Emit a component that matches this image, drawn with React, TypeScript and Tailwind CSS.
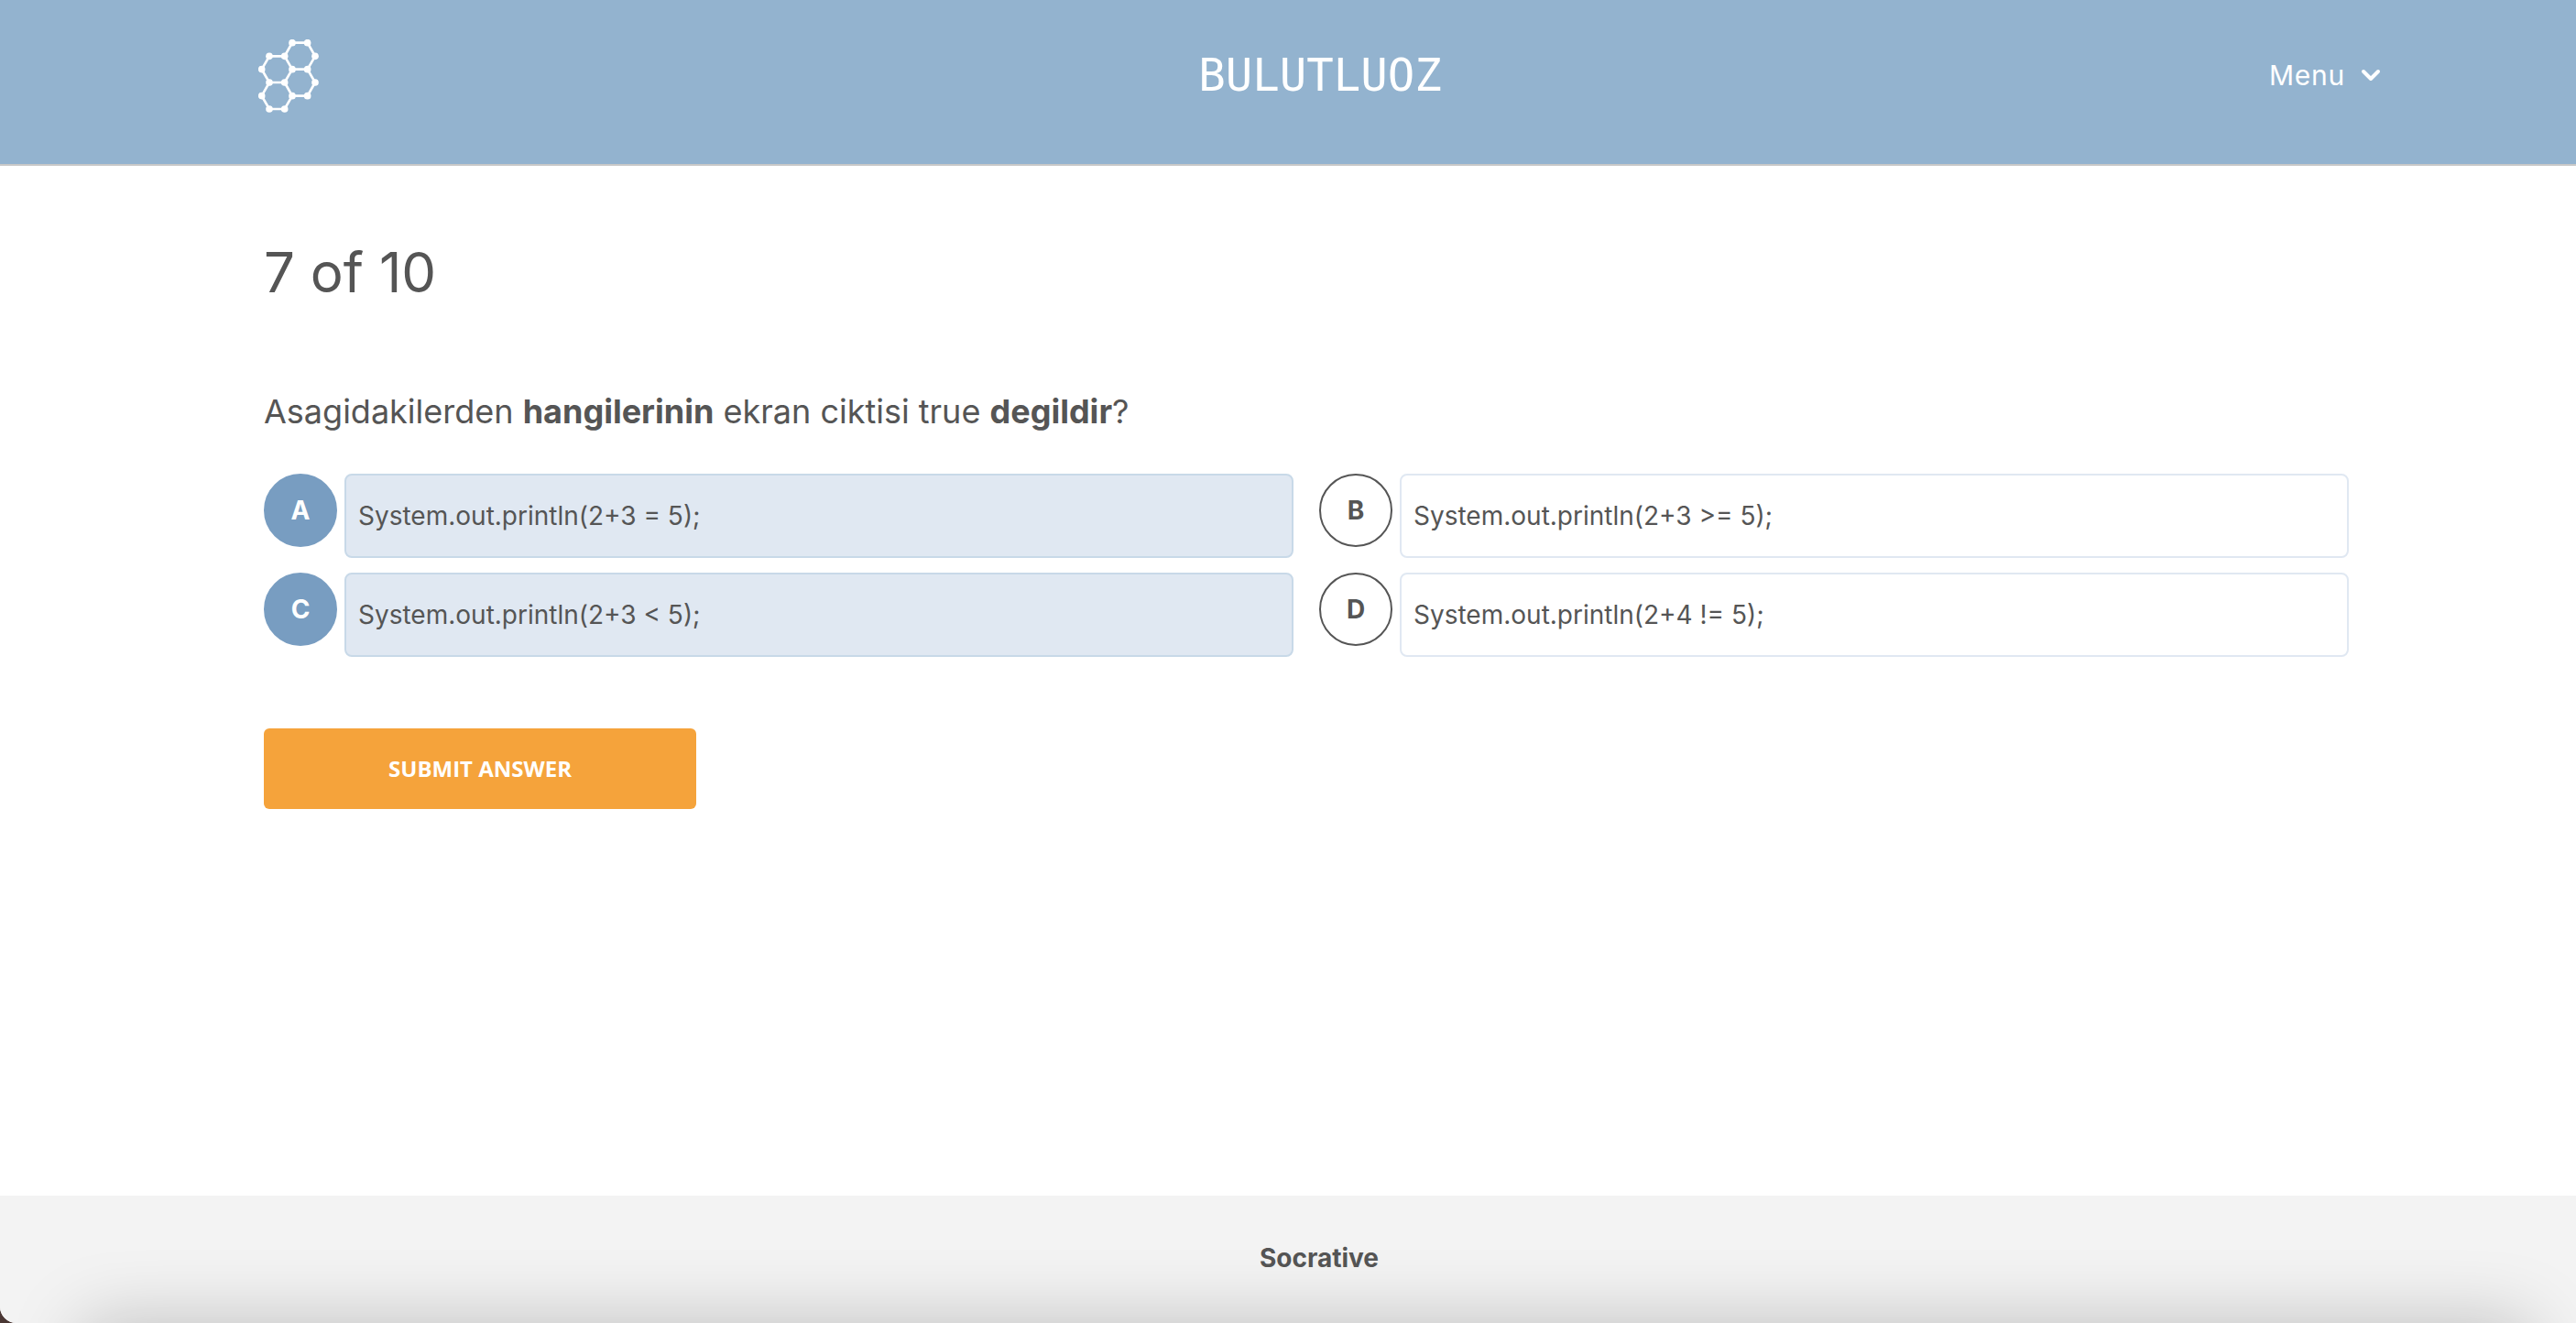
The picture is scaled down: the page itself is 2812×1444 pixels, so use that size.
import { useState } from "react";

const nodes: [number, number][] = [
  [177, 80], [227, 80], [252, 124], [227, 167], [177, 167], [152, 124],
  [102, 124], [77, 167], [102, 210], [152, 210], [252, 210], [227, 254],
  [177, 254], [152, 297], [102, 297], [77, 254],
];

function Logo() {
  return (
    <svg viewBox="66 69 198 240" className="h-20 w-[66px]" fill="none" stroke="white" strokeWidth="8" aria-hidden="true">
      <path d="M177 80H227L252 124L227 167H177L152 124Z" />
      <path d="M152 124H102L77 167L102 210H152L177 167" />
      <path d="M227 167L252 210L227 254H177L152 210" />
      <path d="M177 254L152 297H102L77 254L102 210" />
      {nodes.map(([x, y]) => (
        <circle key={`${x}-${y}`} cx={x} cy={y} r="11.5" fill="white" stroke="none" />
      ))}
    </svg>
  );
}

const answers = [
  { id: "A", text: "System.out.println(2+3 = 5);" },
  { id: "B", text: "System.out.println(2+3 >= 5);" },
  { id: "C", text: "System.out.println(2+3 < 5);" },
  { id: "D", text: "System.out.println(2+4 != 5);" },
];

function Answer({ id, text, checked, onToggle }: { id: string; text: string; checked: boolean; onToggle: () => void }) {
  return (
    <label className="relative flex cursor-pointer items-start gap-2">
      <input type="checkbox" className="peer sr-only" checked={checked} onChange={onToggle} />
      <span className="flex size-20 shrink-0 items-center justify-center rounded-full border-2 border-[#555] text-[28px] font-bold peer-checked:border-[#789dc1] peer-checked:bg-[#789dc1] peer-checked:text-white">
        {id}
      </span>
      <span className="flex-1 rounded-lg border-2 border-[#e0e8f2] px-[13px] py-6 text-[28px] leading-10 peer-checked:border-[#c8d9e8] peer-checked:bg-[#e0e8f2]">
        {text}
      </span>
    </label>
  );
}

export default function App() {
  const [selected, setSelected] = useState<string[]>(["A", "C"]);
  const toggle = (id: string) =>
    setSelected((s) => (s.includes(id) ? s.filter((x) => x !== id) : [...s, id]));

  return (
    <div className="bg-[#4a3734]">
      <div className="relative flex min-h-screen flex-col overflow-hidden rounded-bl-[18px] bg-white font-['Inter',sans-serif] text-[#555]">
        <header className="grid grid-cols-[1fr_auto_1fr] items-start border-b-2 border-[#c8c8c8] bg-[#93b3cf] pt-[43px] pr-[212px] pb-14 pl-[282px] text-white">
          <a href="#home" aria-label="Home" className="justify-self-start">
            <Logo />
          </a>
          <h1 className="font-['DejaVu_Sans_Mono',monospace] text-[49px] leading-20">BULUTLUOZ</h1>
          <button type="button" className="flex items-center gap-4 justify-self-end text-[30px] leading-[78px] tracking-wide">
            Menu
            <svg viewBox="0 0 24 16" className="h-4 w-6" fill="none" stroke="white" strokeWidth="4" strokeLinecap="round" strokeLinejoin="round" aria-hidden="true">
              <path d="M4 4L12 12L20 4" />
            </svg>
          </button>
        </header>

        <main className="flex-1 pt-20 pr-[248px] pl-72">
          <h2 className="text-[60px] leading-18">7 of 10</h2>
          <p className="mt-[92px] text-[36px] leading-12">
            Asagidakilerden <strong>hangilerinin</strong> ekran ciktisi true <strong>degildir</strong>?
          </p>
          <div className="mt-11 grid grid-cols-2 gap-x-7 gap-y-4">
            {answers.map((a) => (
              <Answer key={a.id} {...a} checked={selected.includes(a.id)} onToggle={() => toggle(a.id)} />
            ))}
          </div>
          <button type="button" className="mt-[78px] h-22 w-[472px] rounded-md bg-[#f5a33b] font-['Open_Sans',sans-serif] text-2xl font-bold text-white">
            SUBMIT ANSWER
          </button>
        </main>

        <footer className="bg-[#f3f3f3] pt-12 pr-[180px] pb-[51px] pl-[248px] text-center text-[28px] leading-10 font-bold">
          Socrative
        </footer>
        <div className="pointer-events-none absolute right-[50px] left-[90px] top-full h-40 shadow-[0_0_80px_0_rgba(0,0,0,0.22)]" />
      </div>
    </div>
  );
}
